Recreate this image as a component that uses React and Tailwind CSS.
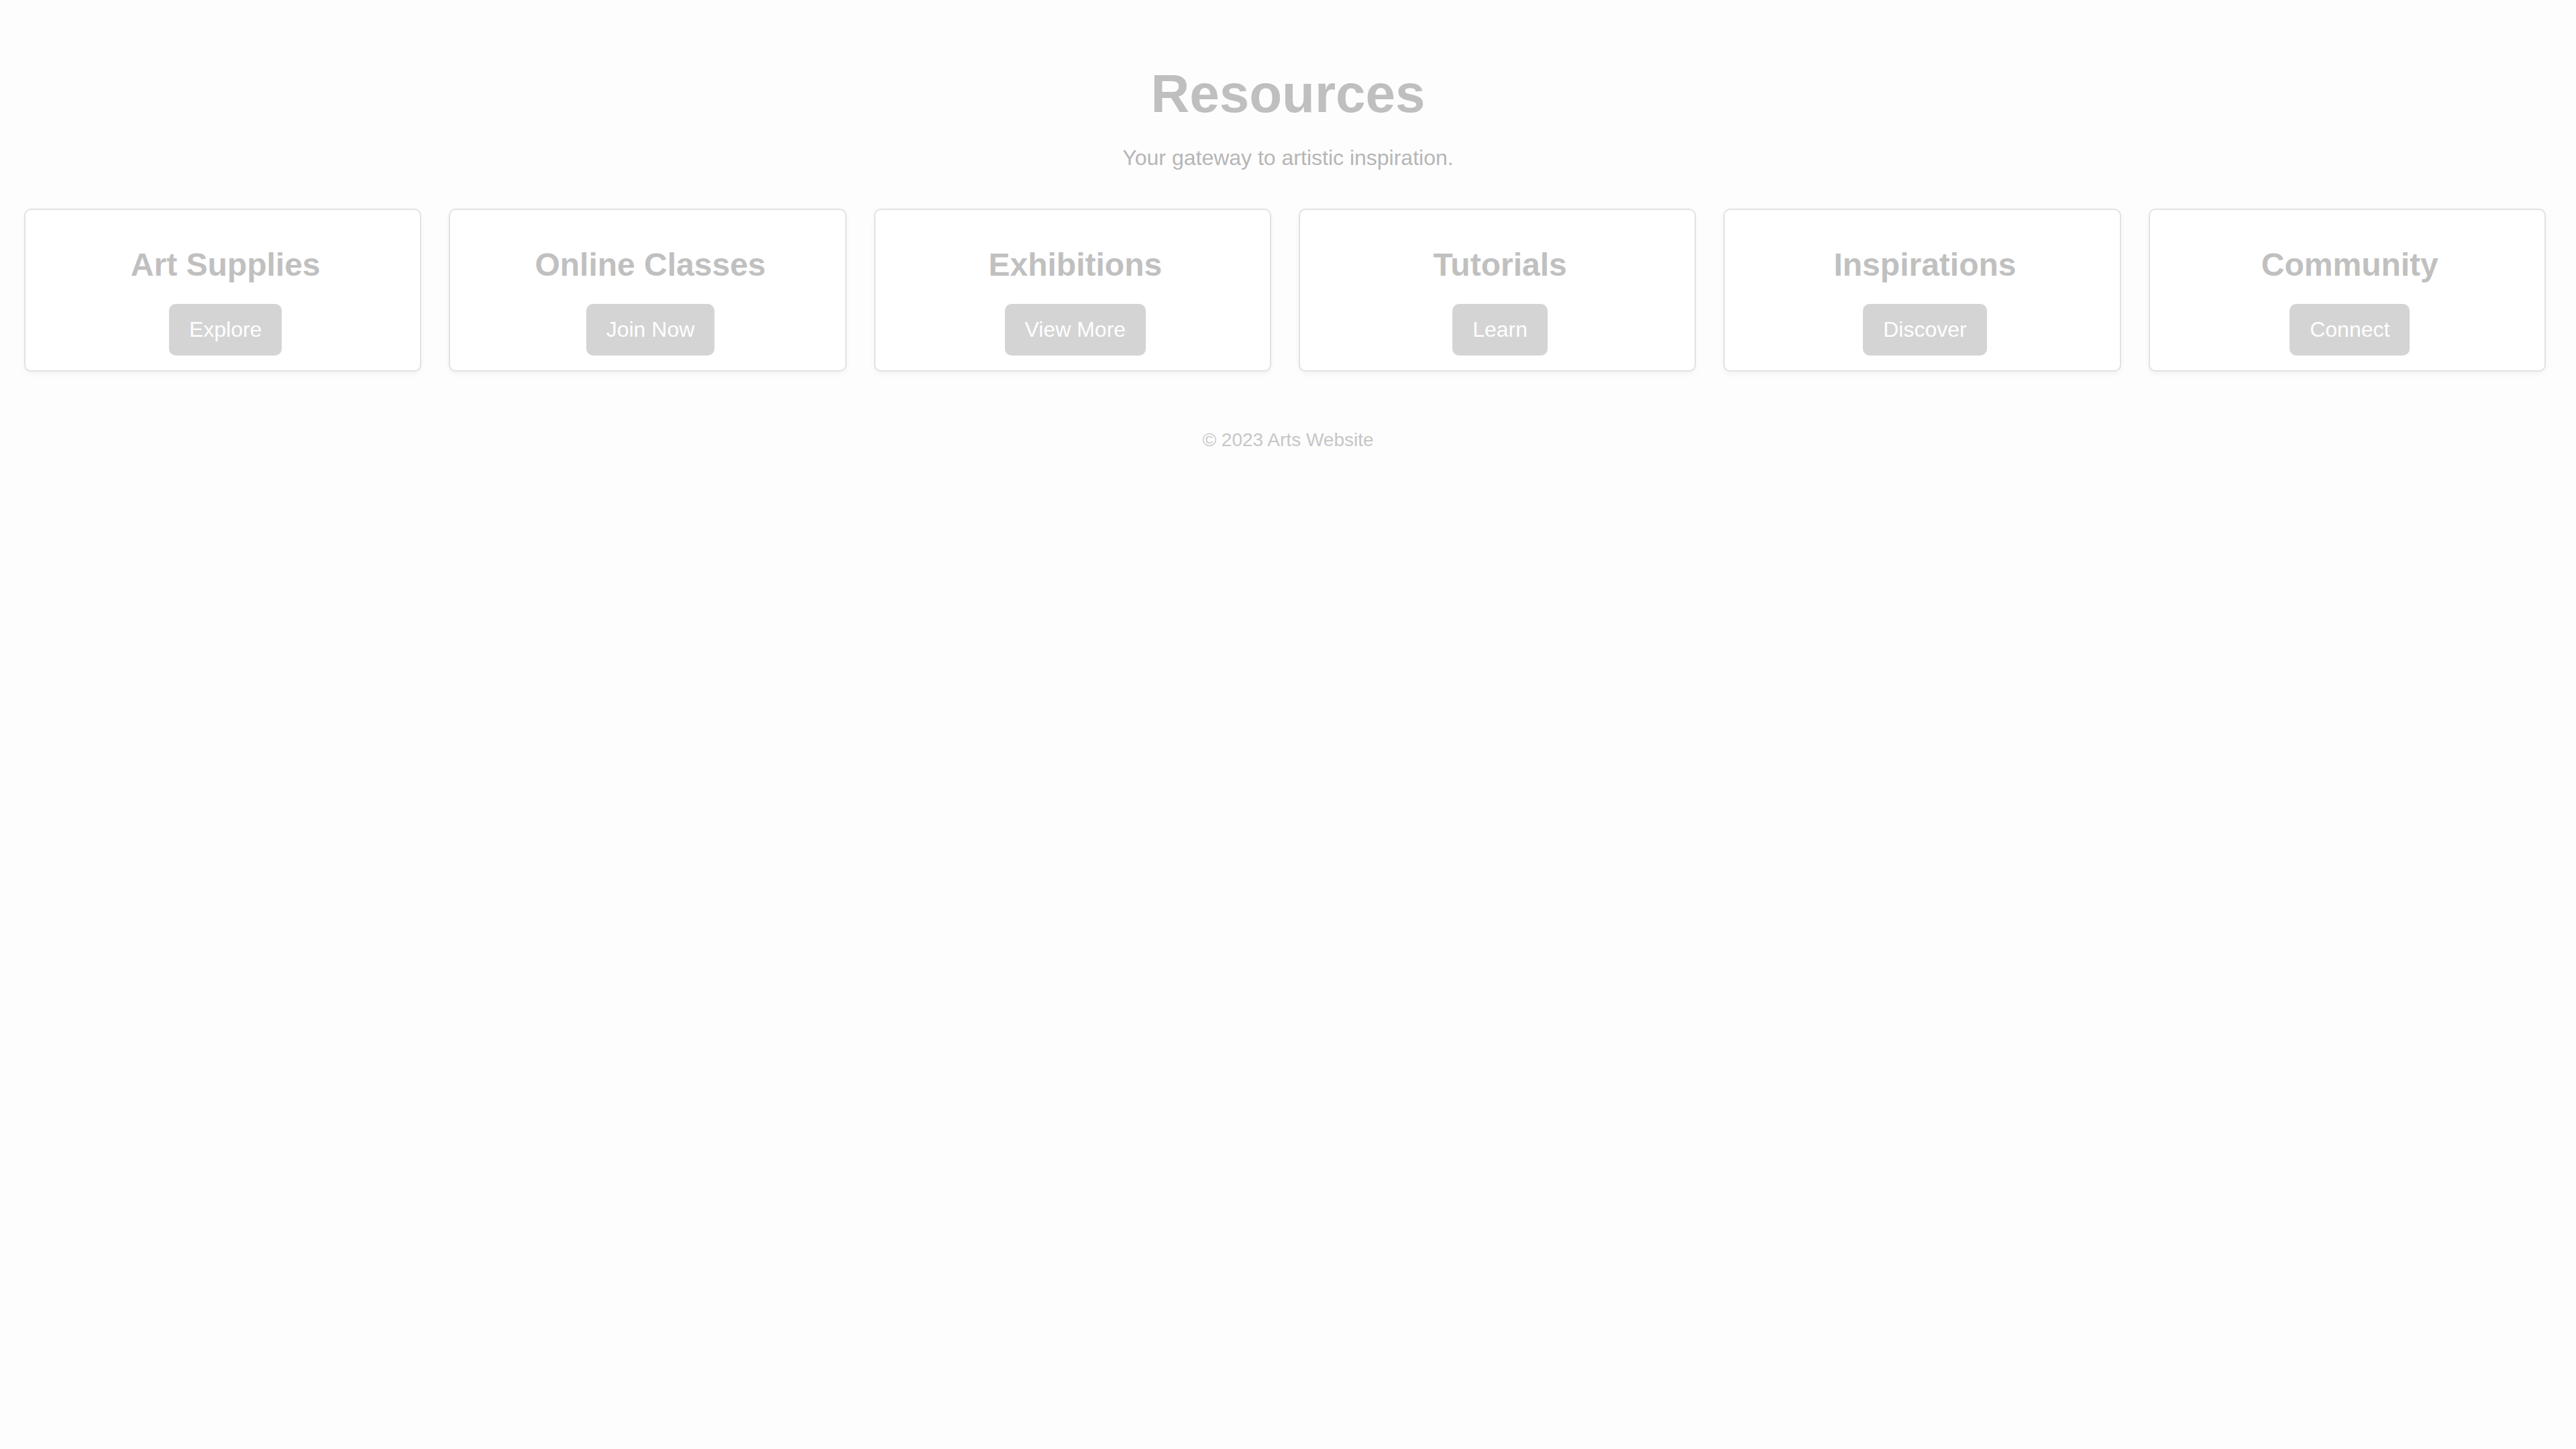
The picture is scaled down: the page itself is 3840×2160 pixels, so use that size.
const resources = [
  { title: "Art Supplies", action: "Explore" },
  { title: "Online Classes", action: "Join Now" },
  { title: "Exhibitions", action: "View More" },
  { title: "Tutorials", action: "Learn" },
  { title: "Inspirations", action: "Discover" },
  { title: "Community", action: "Connect" },
];

const ResourceCard = ({ title, action }) => (
  <div className="flex-1 flex flex-col items-center bg-white border-2 border-[#e2e2e2] rounded-[10px] shadow-[0_4px_8px_rgba(0,0,0,0.04)] pt-[54px] pb-[22px] pl-[24px] pr-[16px]">
    <h3 className="text-[48px] leading-[1.15] font-bold text-[#c0c0c0]">{title}</h3>
    <button className="mt-[31px] bg-[#d4d4d4] text-white text-[32px] leading-[1.15] px-[30px] py-[20px] rounded-[10px]">
      {action}
    </button>
  </div>
);

const App = () => {
  return (
    <div
      className="min-h-screen bg-[#fdfdfd]"
      style={{ fontFamily: '"Liberation Sans", Arial, sans-serif' }}
    >
      <header className="flex flex-col items-center pt-[94px]">
        <h1 className="text-[80px] leading-[1.15] font-bold text-[#bfbfbf]">Resources</h1>
        <p className="mt-[31px] text-[32px] leading-[1.15] text-[#b6b6b6]">
          Your gateway to artistic inspiration.
        </p>
      </header>

      <main className="flex gap-[41px] pl-[36px] pr-[45px] mt-[57px]">
        {resources.map((r) => (
          <ResourceCard key={r.title} title={r.title} action={r.action} />
        ))}
      </main>

      <footer className="flex justify-center mt-[86px]">
        <p className="text-[28px] leading-[1.15] text-[#c6c6c6]">© 2023 Arts Website</p>
      </footer>
    </div>
  );
};

export default App;
